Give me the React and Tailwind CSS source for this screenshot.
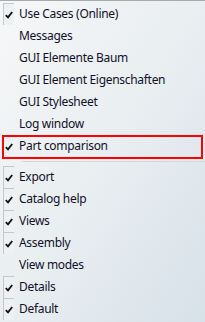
const items = [
  { label: "Use Cases (Online)", checked: true },
  { label: "Messages" },
  { label: "GUI Elemente Baum" },
  { label: "GUI Element Eigenschaften" },
  { label: "GUI Stylesheet" },
  { label: "Log window" },
  { label: "Part comparison", checked: true, marked: true },
  { separator: true },
  { label: "Export", checked: true },
  { label: "Catalog help", checked: true },
  { label: "Views", checked: true },
  { label: "Assembly", checked: true },
  { label: "View modes" },
  { label: "Details", checked: true },
  { label: "Default", checked: true },
];

function Check() {
  return (
    <svg width="8" height="8" viewBox="0 0 8 8" className="block">
      <path d="M0.8 4.2 L3 6.4 L7.2 1" fill="none" stroke="#111" strokeWidth="1.8" />
    </svg>
  );
}

function MenuRow({ item }) {
  return (
    <div className="relative flex h-[22px] items-center">
      <div className="ml-[3px] flex h-[22px] w-[11px] shrink-0 items-center justify-center">
        {item.checked && (
          <div className="flex h-[22px] w-[11px] items-center justify-center border-l border-t border-[#c4c8cc] bg-[#eef1f3]">
            <Check />
          </div>
        )}
      </div>
      <span className="ml-[5px] whitespace-nowrap text-[12px] leading-none tracking-[-0.3px] text-[#10102a]">
        {item.label}
      </span>
      {item.marked && (
        <div className="absolute left-[2px] right-[2px] top-0 -bottom-[2px] border-2 border-[#ff0000]" />
      )}
    </div>
  );
}

export default function App() {
  return (
    <div
      className="h-[322px] w-[205px] overflow-hidden border-t border-[#a7abb0] bg-gradient-to-br from-[#f6f7f8] via-[#e9eef1] to-[#d7e1e9] pt-[2px]"
      style={{ fontFamily: '"Noto Sans", "Open Sans", sans-serif' }}
    >
      {items.map((item, i) =>
        item.separator ? (
          <div key={i} className="flex h-[9px] items-center pl-[22px]">
            <div className="h-px w-full bg-[#d3d8dc]" />
          </div>
        ) : (
          <MenuRow key={i} item={item} />
        )
      )}
    </div>
  );
}
